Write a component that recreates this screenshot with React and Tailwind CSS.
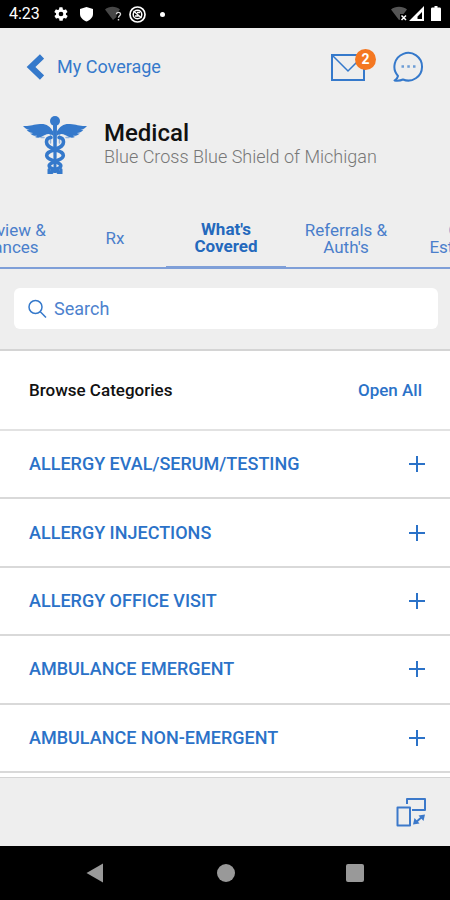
import { useState } from 'react';

const categories = [
  'ALLERGY EVAL/SERUM/TESTING',
  'ALLERGY INJECTIONS',
  'ALLERGY OFFICE VISIT',
  'AMBULANCE EMERGENT',
  'AMBULANCE NON-EMERGENT',
];

function StatusBar() {
  return (
    <div className="flex h-7 shrink-0 items-center justify-between bg-black pl-[9px] pr-2 text-white">
      <div className="flex items-center">
        <span className="w-8 text-base leading-5">4:23</span>
        <svg className="ml-3 size-4" viewBox="0 0 24 24" fill="currentColor" aria-hidden="true">
          <path d="M19.4 13a7.500 7.500 0 0 0 0-2l2.100-1.600c.2-.2.300-.4.1-.7l-2-3.400c-.1-.2-.4-.3-.6-.2l-2.500 1a7 7 0 0 0-1.700-1l-.4-2.600a.5.5 0 0 0-.5-.5h-4a.5.5 0 0 0-.5.500l-.4 2.600c-.6.200-1.200.6-1.700 1l-2.500-1c-.2-.1-.5 0-.6.200l-2 3.400c-.1.200-.1.500.1.700L4.600 11a7.500 7.500 0 0 0 0 2l-2.100 1.600c-.2.200-.3.500-.1.700l2 3.400c.1.300.4.300.6.200l2.500-1c.5.400 1.100.8 1.700 1l.4 2.700c0 .2.200.4.500.4h4c.2 0 .5-.2.500-.4l.4-2.700c.6-.2 1.200-.6 1.700-1l2.500 1c.2.100.5 0 .6-.2l2-3.400c.1-.2.1-.5-.1-.7zM12 15.500a3.500 3.500 0 1 1 0-7 3.500 3.500 0 0 1 0 7z" />
        </svg>
        <svg className="ml-[11px] h-4 w-[13px]" viewBox="0 0 13 16" fill="currentColor" aria-hidden="true">
          <path d="M6.500 1 13 3v5c0 3.500-3 6-6.500 7.500C3 14 0 11.500 0 8V3z" />
        </svg>
        <svg className="ml-3 h-4 w-[17px]" viewBox="0 0 17 16" aria-hidden="true">
          <path d="M0 3.500C4-.2 11-.2 15 3.500L11.500 7.500V11L8 14z" fill="#474747" />
          <path d="M11.500 8.200c0-2.400 4-2.400 4 0 0 1.600-2 1.700-2 3.600M13.500 13v1.500" fill="none" stroke="#d5d5d5" strokeWidth="1.400" />
        </svg>
        <svg className="ml-[7px] h-[17px] w-[17px]" viewBox="0 0 17 17" fill="none" stroke="currentColor" aria-hidden="true">
          <circle cx="8.500" cy="8.500" r="7.500" strokeWidth="1.700" />
          <circle cx="8.500" cy="8.500" r="4.300" strokeWidth="1.500" />
          <path d="M4.500 5 12.500 12M8 6.500h3M6 10h3.500" strokeWidth="1.400" />
        </svg>
        <span className="ml-[14px] size-[5px] rounded-full bg-white" />
      </div>
      <svg className="h-4 w-[51px]" viewBox="0 0 51 16" aria-hidden="true">
        <path d="M0 3.500C4-.2 12-.2 16 3.500L12.500 8H9v5.500L8 14z" fill="#555" />
        <path d="m10.500 9.500 4.500 4.500M15 9.500 10.500 14" stroke="#fff" strokeWidth="1.500" />
        <path d="M33 0v15H18zM31 6 26.500 10.500V13H31z" fill="#fff" fillRule="evenodd" />
        <path d="M43.500 0h3v1.500H49a1.500 1.500 0 0 1 1 1.500v12h-10V3a1.500 1.500 0 0 1 1-1.500h2.500z" fill="#fff" />
      </svg>
    </div>
  );
}

function Caduceus() {
  return (
    <svg className="h-[58px] w-16 shrink-0" viewBox="0 0 64 58" aria-hidden="true">
      <g fill="#3579cb">
        <circle cx="32" cy="5" r="5" />
        <path d="M30 9h4l-.6 48h-2.800z" />
        <path d="M30.500 16C27 10 23 7.500 17 8 10 8.500 7 10.500 0 10c2 2.500 4 3.300 6.500 3.700-1 .2-2 .2-3 0 2 2.300 4 3.200 6.500 3.300-.8.500-1.800.6-2.800.5 2 2 4.300 2.500 6.800 2.200-.5.600-1.500 1-2.500 1.100 3 1.400 5.500 1 7.500-.3 2.500-1.500 4-2.500 6.500-2.500 2 0 3.500.7 5 2z" />
        <path d="M33.500 16C37 10 41 7.500 47 8c7 .5 10 2.500 17 2-2 2.500-4 3.300-6.500 3.700 1 .2 2 .2 3 0-2 2.300-4 3.200-6.500 3.300.8.500 1.800.6 2.800.5-2 2-4.300 2.500-6.800 2.200.5.600 1.500 1 2.500 1.100-3 1.400-5.500 1-7.500-.3-2.500-1.500-4-2.500-6.500-2.500-2 0-3.500.7-5 2z" />
      </g>
      <g fill="none" stroke="#3579cb" strokeLinecap="round">
        <path d="M28 21.500c-3 .2-4.500 2-4.500 4.500 0 4.500 4.500 5.500 8.500 7.500 4.500 2 8.300 2.500 8.300 6 0 3.300-4.300 4-8.300 6-3.500 1.500-5.800 2-5.800 4.300 0 2.400 3.300 2.800 5.800 3.800l5 3" strokeWidth="3.600" />
        <path d="M36 21.500c3 .2 4.500 2 4.500 4.500 0 4.500-4.500 5.500-8.500 7.500-4.500 2-8.300 2.500-8.300 6 0 3.300 4.300 4 8.300 6 3.500 1.500 5.800 2 5.800 4.300 0 2.400-3.300 2.800-5.800 3.800l-5 3" strokeWidth="3.600" />
        <path d="M26 53.500v3h3M38 53.500v3h-3" strokeWidth="3" />
        <path d="M17 18.500h5M18 21.500h3M42 18.500h5M43 21.500h3M27.500 18v9M36.500 18v9" strokeWidth="1.500" opacity=".5" />
      </g>
    </svg>
  );
}

function Header() {
  return (
    <header className="bg-[#eee] pt-4 text-[#3579cb]">
      <div className="flex h-[45px] items-center justify-between pl-[26px] pr-[26px]">
        <a href="#coverage" className="flex items-center gap-[13px] text-lg leading-6">
          <svg className="h-[26px] w-[18px]" viewBox="0 0 18 26" fill="none" stroke="currentColor" strokeWidth="6" aria-hidden="true">
            <path d="M16 2.500 5 13 16 23.500" />
          </svg>
          My Coverage
        </a>
        <div className="flex items-center gap-[27px]">
          <button type="button" aria-label="Messages, 2 unread" className="relative">
            <svg className="h-7 w-[35px]" viewBox="0 0 35 28" fill="none" stroke="currentColor" aria-hidden="true">
              <path d="M1 2h32v25H1z" strokeWidth="2" />
              <path d="m2 3 15 15L32 3" strokeWidth="1.500" />
            </svg>
            <span className="absolute -top-1 left-6 flex size-[21px] items-center justify-center rounded-full bg-[#f47721] text-sm leading-4 font-bold text-white">2</span>
          </button>
          <button type="button" aria-label="Chat">
            <svg className="h-8 w-[31px]" viewBox="0 0 31 32" fill="none" stroke="currentColor" strokeWidth="2" aria-hidden="true">
              <path d="M5 25A13.800 13.800 0 1 1 10 28.500c-2.500 1.200-5 1.500-8.500 1 2-1.200 3.200-2.500 3.500-4.500z" strokeLinejoin="round" />
              <path d="M8.500 15.500H11M14.300 15.500h2.500M20 15.500h2.500" strokeWidth="2.500" opacity=".7" />
            </svg>
          </button>
        </div>
      </div>
      <div className="flex items-center gap-[17px] pt-[27px] pl-[23px] pr-4">
        <Caduceus />
        <div>
          <h1 className="text-2xl leading-6 font-medium text-[#111]">Medical</h1>
          <p className="text-lg leading-6 font-light text-[#777]">Blue Cross Blue Shield of Michigan</p>
        </div>
      </div>
    </header>
  );
}

function Tabs() {
  const tab = 'flex h-[61px] w-[120px] shrink-0 items-center justify-center pt-1 text-center text-[17px] leading-[17px]';
  return (
    <nav aria-label="Coverage sections" className="overflow-hidden border-b-2 border-[#7f9fd8] bg-[#eee] pt-8 text-[#4a7ecb]">
      <div className="-ml-14 flex">
        <a href="#overview" className={tab}>Overview &amp;<br />Balances</a>
        <a href="#rx" className="flex h-[61px] w-[102px] shrink-0 items-center justify-center pt-1 text-[17px] leading-[17px]">Rx</a>
        <a href="#covered" aria-current="page" className="flex h-[61px] w-[120px] shrink-0 items-center justify-center border-b border-[#7f9fd8] pt-1 text-center text-[17px] leading-[17px] font-bold text-[#2469bd]">What's<br />Covered</a>
        <a href="#referrals" className={tab}>Referrals &amp;<br />Auth's</a>
        <a href="#cost" className={tab}>Cost<br />Estimator</a>
      </div>
    </nav>
  );
}

function Plus() {
  return (
    <svg className="size-4" viewBox="0 0 16 16" fill="none" stroke="currentColor" strokeWidth="2" aria-hidden="true">
      <path d="M8 0v16M0 8h16" />
    </svg>
  );
}

export default function App() {
  const [query, setQuery] = useState('');
  return (
    <div className="flex min-h-screen flex-col bg-white font-[Roboto,sans-serif]">
      <StatusBar />
      <Header />
      <Tabs />
      <form role="search" className="border-b-2 border-[#d4d4d4] bg-[#eee] pt-[19px] pr-3 pb-5 pl-[14px]">
        <label className="flex h-[41px] items-center gap-[7px] rounded-md bg-white px-[14px] text-[#3579cb]">
          <svg className="size-[19px] shrink-0" viewBox="0 0 19 19" fill="none" stroke="currentColor" strokeWidth="1.500" aria-hidden="true">
            <circle cx="7.500" cy="8" r="6.500" />
            <path d="m12.300 12.800 5.700 5.700" />
          </svg>
          <input
            type="search"
            aria-label="Search"
            placeholder="Search"
            value={query}
            onChange={(event) => setQuery(event.target.value)}
            className="min-w-0 flex-1 bg-transparent text-lg leading-6 outline-none placeholder:text-[#4d82ce]"
          />
        </label>
      </form>
      <main className="flex flex-1 flex-col pb-1 font-medium">
        <div className="flex h-20 items-center justify-between border-b-2 border-[#e2e2e2] pr-7 pl-[29px] text-[17px] leading-6">
          <h2 className="text-[#111]">Browse Categories</h2>
          <button type="button" className="text-[#2b72c8]">Open All</button>
        </div>
        <ul className="flex flex-1 flex-col">
          {categories.map((name) => (
            <li key={name} className="flex flex-1 border-b-2 border-[#d9d9d9]">
              <button type="button" aria-expanded="false" className="flex flex-1 items-center justify-between py-5 pr-[25px] pl-[29px] text-left text-lg leading-6 text-[#2b72c8]">
                {name}
                <Plus />
              </button>
            </li>
          ))}
        </ul>
      </main>
      <footer className="flex h-[69px] shrink-0 items-center justify-end border-t border-[#d4d4d4] bg-[#eee] pr-6 text-[#3c79ca]">
        <button type="button" aria-label="Switch view">
          <svg className="h-[30px] w-[30px]" viewBox="0 0 30 30" fill="none" stroke="currentColor" strokeWidth="2" aria-hidden="true">
            <path d="M11 7V2h18v11H16M1.500 10.500H14v18H1.500z" strokeLinejoin="round" />
            <path d="m19 26 8-7" strokeWidth="2" />
            <path d="M17 27.500 18.500 21l5 5.500zM29 17.500 27.500 24l-5-5.500z" fill="currentColor" stroke="none" />
          </svg>
        </button>
      </footer>
      <div className="flex h-[54px] shrink-0 items-center justify-around bg-black px-[30px] text-[#999]">
        <button type="button" aria-label="Back">
          <svg className="size-5" viewBox="0 0 20 20" fill="currentColor" aria-hidden="true"><path d="M17 .5v19L.5 10z" /></svg>
        </button>
        <button type="button" aria-label="Home" className="size-[18px] rounded-full bg-[#999]" />
        <button type="button" aria-label="Recent apps" className="size-[18px] rounded-xs bg-[#999]" />
      </div>
    </div>
  );
}
